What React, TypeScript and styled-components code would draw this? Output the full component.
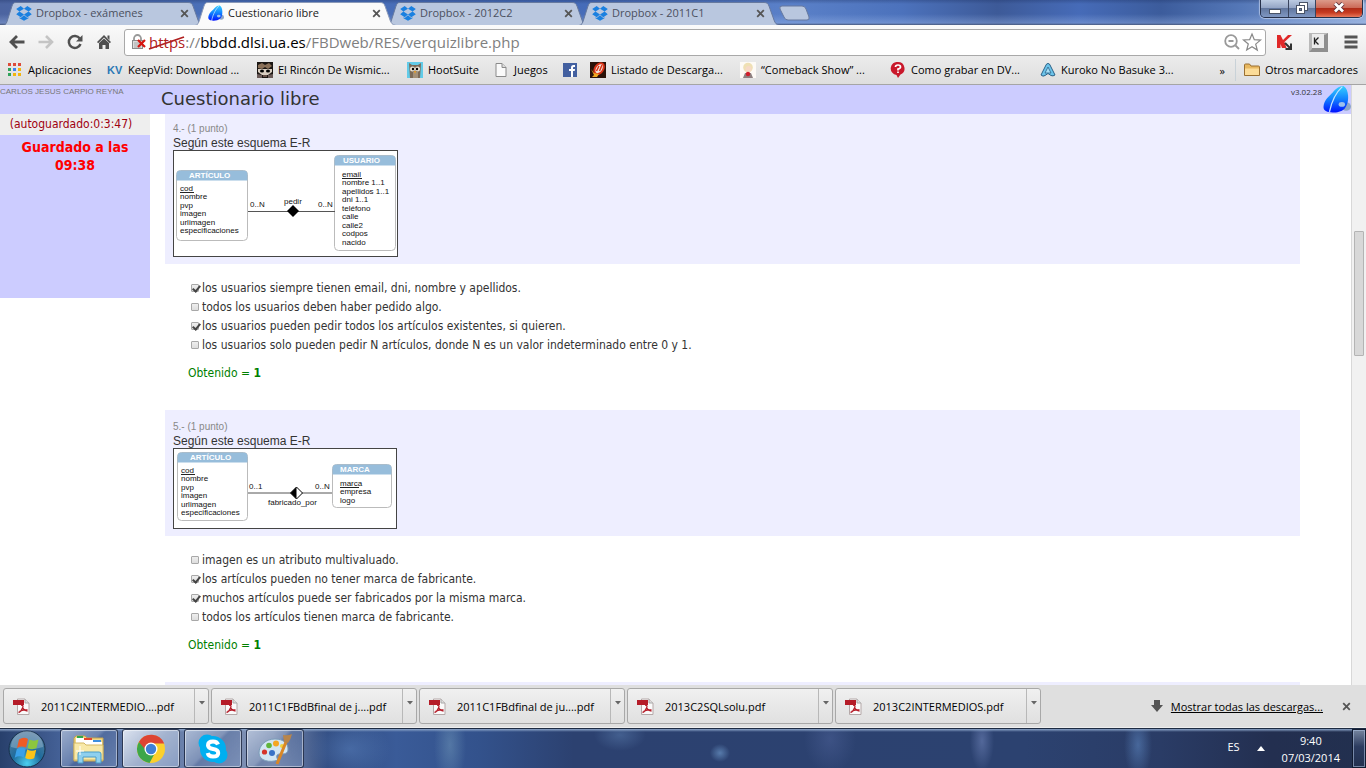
import React from "react";
import styled, { createGlobalStyle, css } from "styled-components";

const ui = `"Open Sans", "Noto Sans", sans-serif`;
const body = `"DejaVu Sans Condensed", "DejaVu Sans", sans-serif`;
const arial = `"Liberation Sans", Arial, sans-serif`;

const Global = createGlobalStyle`
  * { box-sizing: border-box; }
  body { margin: 0; font-family: ${ui}; font-size: 11px; color: #000; }
  button { font: inherit; color: inherit; padding: 0; margin: 0; border: 0; background: none; }
  a { color: inherit; text-decoration: none; }
  svg { display: block; flex: none; }
  p, h1, h2, ul { margin: 0; padding: 0; font-weight: normal; list-style: none; }
`;

const Shell = styled.div`
  height: 100vh;
  display: flex;
  flex-direction: column;
  overflow: hidden;
`;

/* ---------- title bar ---------- */
const TitleBar = styled.header`
  flex: none;
  height: 25px;
  display: flex;
  align-items: flex-end;
  padding-left: 3px;
  background:
    linear-gradient(180deg, rgba(30, 50, 100, 0.35) 0, rgba(30, 50, 100, 0) 4px, rgba(255, 255, 255, 0) 14px, rgba(170, 195, 240, 0.35) 23px, #47587c 25px),
    linear-gradient(90deg, #4c64a0 0, #4b70b8 15%, #456bb8 42%, #5a80c8 58%, #4c72bc 66%, #3d5a98 73%, #466bb8 79%, #3c5c9c 85%, #5578b8 91%, #8fa9d6 100%);
`;

const TabBox = styled.div<{ $active?: boolean }>`
  position: relative;
  flex: 0 1 201px;
  height: 24px;
  margin-right: -9px;
  z-index: ${(p) => (p.$active ? 2 : 1)};
  display: flex;
  align-items: center;
  gap: 4px;
  padding: 0 15px 0 13px;
  color: ${(p) => (p.$active ? "#222" : "#4b5060")};
  > svg:first-child { position: absolute; left: 0; top: 0; z-index: -1; }
`;
const TabTitle = styled.a`
  flex: 1;
  white-space: nowrap;
  overflow: hidden;
  line-height: 18px;
`;
const IconButton = styled.button`
  display: flex;
  align-items: center;
  justify-content: center;
  flex: none;
`;
const NewTab = styled(IconButton)`
  align-self: center;
  margin-left: 8px;
`;
const WindowControls = styled.div`
  margin-left: auto;
  margin-right: 3px;
  align-self: flex-start;
  display: flex;
  height: 18px;
  border: 1px solid #26304a;
  border-top: 0;
  border-radius: 0 0 5px 5px;
  overflow: hidden;
  box-shadow: 0 0 1px 1px rgba(220, 230, 250, 0.6);
`;
const WindowButton = styled.button<{ $close?: boolean }>`
  width: ${(p) => (p.$close ? 47 : 27)}px;
  display: flex;
  align-items: center;
  justify-content: center;
  padding-bottom: 2px;
  border-left: 1px solid #39445e;
  &:first-child { border-left: 0; }
  background: ${(p) =>
    p.$close
      ? "linear-gradient(#dc9a8a 0, #cc6a58 45%, #b02c18 50%, #c83c22 75%, #e8795c 100%)"
      : "linear-gradient(#bccbe2 0, #95a6c6 45%, #62779f 50%, #7f97c2 100%)"};
`;

/* ---------- toolbar ---------- */
const Toolbar = styled.nav`
  flex: none;
  height: 31px;
  display: flex;
  align-items: center;
  padding: 3px 8px 0 9px;
  background: linear-gradient(#fafafa, #ececec);
`;
const NavButtons = styled.div`
  display: flex;
  align-items: center;
  gap: 13px;
  width: 115px;
  flex: none;
`;
const AddressBar = styled.div`
  flex: 1;
  height: 27px;
  display: flex;
  align-items: center;
  padding: 0 2px 0 6px;
  background: #fff;
  border: 1px solid #a9a9a9;
  border-radius: 3px;
`;
const Url = styled.div`
  position: relative;
  flex: 1;
  margin-left: 2px;
  font-size: 15px;
  line-height: 22px;
  white-space: nowrap;
  color: #808080;
  > svg { position: absolute; left: -1px; top: 4px; }
`;
const Scheme = styled.span`color: #b02020;`;
const Host = styled.span`color: #000;`;
const Extensions = styled.div`
  display: flex;
  align-items: center;
  gap: 16px;
  margin-left: 10px;
`;

/* ---------- bookmarks ---------- */
const Bookmarks = styled.nav`
  flex: none;
  height: 29px;
  display: flex;
  align-items: center;
  padding: 0 8px 0 7px;
  background: linear-gradient(#ececec, #dedede);
  border-bottom: 1px solid #a5a5a5;
`;
const Bookmark = styled.a<{ $w?: number }>`
  display: flex;
  align-items: center;
  gap: 5px;
  flex: 0 0 ${(p) => (p.$w ? p.$w + "px" : "auto")};
  line-height: 18px;
  white-space: nowrap;
`;
const BookmarkEnd = styled.div`
  margin-left: auto;
  display: flex;
  align-items: center;
  gap: 8px;
`;
const Divider = styled.span`
  width: 1px;
  height: 22px;
  margin-left: 2px;
  background: #c9d2d8;
`;

/* ---------- page ---------- */
const Viewport = styled.div`
  flex: 1;
  min-height: 0;
  display: flex;
  background: #fff;
`;
const Page = styled.div`
  flex: 1;
  display: flex;
  flex-direction: column;
  overflow: hidden;
  color: #333;
`;
const PageHeader = styled.div`
  flex: none;
  height: 29px;
  display: flex;
  background: #ccf;
`;
const UserName = styled.div`
  width: 161px;
  font: 8px/14px ${arial};
  color: #777;
  white-space: nowrap;
`;
const PageTitle = styled.h1`
  flex: 1;
  font: 18px/28px "DejaVu Sans", sans-serif;
`;
const Version = styled.div`
  display: flex;
  gap: 1px;
  font: 8px/14px ${ui};
`;
const Columns = styled.div`
  flex: 1;
  min-height: 0;
  display: flex;
  align-items: flex-start;
`;
const Sidebar = styled.aside`
  flex: none;
  width: 150px;
  height: 184px;
  background: #ccf;
  text-align: center;
`;
const AutoSave = styled.p`
  background: #eee;
  color: #a00010;
  font: 12px/21px ${body};
  white-space: nowrap;
  padding-right: 8px;
`;
const Saved = styled.p`
  padding: 3px 20px;
  color: #f00;
  font: bold 14px/18px ${body};
`;
const Quiz = styled.main`
  flex: 1;
  padding: 0 51px 0 15px;
`;
const Prompt = styled.section<{ $first?: boolean }>`
  background: #eef;
  padding: ${(p) => (p.$first ? 8 : 10)}px 8px 7px;
`;
const Points = styled.p`
  font: 10px/14px ${arial};
  color: #888;
`;
const Statement = styled.h2`
  font: 12px/14px ${arial};
`;
const Answers = styled.div`
  padding: 15px 23px 27px;
  font: 12px/19px ${body};
`;
const Option = styled.label`
  display: flex;
  align-items: center;
  gap: 3px;
  padding-left: 3px;
  white-space: nowrap;
`;
const Check = styled.input`
  appearance: none;
  position: relative;
  margin: 0 0 2px;
  width: 8px;
  height: 8px;
  border: 1px solid #a8a8a8;
  border-radius: 1px;
  background: linear-gradient(#eee, #ddd);
  &:checked::after {
    content: "";
    position: absolute;
    left: 2px;
    top: -1px;
    width: 3px;
    height: 6px;
    border: solid #444;
    border-width: 0 2px 2px 0;
    transform: rotate(40deg);
  }
`;
const Score = styled.p`
  margin-top: 9px;
  color: #008000;
`;
const ScrollTrack = styled.div`
  flex: none;
  width: 15px;
  padding: 146px 2px 0;
  background: #f1f1f1;
  border-left: 1px solid #d8d8d8;
`;
const ScrollThumb = styled.div`
  height: 125px;
  width: 10px;
  background: #d8d8d8;
  border: 1px solid #b4b4b4;
  border-radius: 1px;
`;

/* ---------- downloads ---------- */
const Downloads = styled.footer`
  flex: none;
  height: 43px;
  display: flex;
  align-items: center;
  gap: 2px;
  padding: 0 15px 0 3px;
  background: #dfdfdf;
  border-bottom: 1px solid #eee;
`;
const DownloadItem = styled.div`
  flex: 0 1 206px;
  height: 36px;
  display: flex;
  border: 1px solid #a8a8a8;
  border-radius: 3px;
  background: linear-gradient(#f0f0f0, #e0e0e0);
`;
const FileButton = styled.button`
  flex: 1;
  min-width: 0;
  display: flex;
  align-items: center;
  gap: 11px;
  padding-left: 9px;
  white-space: nowrap;
`;
const FileMenu = styled.button`
  width: 14px;
  display: flex;
  justify-content: center;
  padding-top: 12px;
  border-left: 1px solid #b8b8b8;
`;
const ShowAll = styled.a`
  margin-left: auto;
  display: flex;
  align-items: center;
  gap: 8px;
  white-space: nowrap;
  span { text-decoration: underline; }
`;
const CloseShelf = styled(IconButton)`margin-left: 17px;`;

/* ---------- taskbar ---------- */
const Taskbar = styled.footer`
  flex: none;
  height: 40px;
  display: flex;
  align-items: stretch;
  gap: 4px;
  padding-left: 8px;
  border-top: 1px solid #1d2b42;
  color: #fff;
  background:
    linear-gradient(180deg, #8ba4c8 0, rgba(139, 164, 200, 0) 3px),
    radial-gradient(ellipse 16px 44px at 450px 16px, rgba(120, 160, 190, 0.45), transparent),
    radial-gradient(ellipse 26px 16px at 620px 6px, rgba(110, 150, 200, 0.35), transparent),
    radial-gradient(ellipse 10px 9px at 720px 24px, rgba(130, 180, 230, 0.5), transparent),
    radial-gradient(ellipse 26px 34px at 830px 10px, rgba(100, 120, 180, 0.3), transparent),
    radial-gradient(ellipse 12px 30px at 982px 12px, rgba(130, 150, 205, 0.45), transparent),
    radial-gradient(ellipse 14px 34px at 1138px 16px, rgba(100, 145, 205, 0.5), transparent),
    radial-gradient(ellipse 40px 30px at 350px 20px, rgba(90, 130, 190, 0.5), transparent),
    linear-gradient(90deg, #28406c 0, #48659c 5%, #8495b6 20%, #304b80 24%, #3a5b98 29%, #33528c 35%, #2c4170 42%, #2c4270 75%, #2a3c66 85%, #232f50 93%, #22304f 100%);
`;
const Start = styled(IconButton)`width: 38px; margin-right: 10px;`;
const TaskButton = styled.button<{ $active?: boolean }>`
  width: 58px;
  display: flex;
  align-items: center;
  justify-content: center;
  border: 1px solid rgba(20, 30, 55, 0.8);
  border-radius: 3px;
  box-shadow: inset 0 0 0 1px rgba(255, 255, 255, 0.45);
  ${(p) =>
    p.$active
      ? css`background: linear-gradient(135deg, rgba(235, 240, 248, 0.9) 0, rgba(185, 198, 220, 0.75) 50%, rgba(150, 170, 205, 0.7) 100%);`
      : css`background: linear-gradient(135deg, rgba(215, 225, 240, 0.6) 0, rgba(150, 168, 200, 0.4) 45%, rgba(80, 105, 155, 0.35) 50%, rgba(125, 148, 190, 0.4) 100%);`}
`;
const Tray = styled.div`
  margin-left: auto;
  display: flex;
  align-items: center;
  gap: 17px;
`;
const Lang = styled.button`padding-bottom: 4px;`;
const Clock = styled.div`
  text-align: center;
  line-height: 17px;
`;
const ShowDesktop = styled.button`
  width: 14px;
  margin-left: 8px;
  border: 1px solid #101a30;
  box-shadow: inset 0 0 0 1px rgba(170, 190, 220, 0.6);
  background: linear-gradient(#76859f, #2c3c60 45%, #22304f);
`;

/* ---------- icons ---------- */
const Cross = () => (
  <svg width="9" height="9" viewBox="0 0 9 9"><path d="M1.200 1.200l6.600 6.600M7.800 1.200l-6.600 6.600" stroke="#555" strokeWidth="1.800" /></svg>
);
const DropboxIcon = () => (
  <svg width="16" height="16" viewBox="0 0 16 16" fill="#1a80e0">
    <path d="M4.7 1L8 3.7 3.4 6.6 0.2 4zM11.3 1L8 3.7l4.6 2.900L15.800 4zM0.200 9.200L3.400 6.600 8 9.500 4.700 12.200zM15.800 9.200l-3.200-2.600L8 9.500l3.300 2.700zM3.500 12.200l1.200.8L8 10.300l3.300 2.700 1.200-.8v1.100L8 15.800l-4.500-2.500z" />
  </svg>
);
const Drop = ({ s }: { s: number }) => (
  <svg width={s} height={s} viewBox="0 0 26 26">
    <defs>
      <linearGradient id="drop" x1="0" y1="0" x2="0" y2="1">
        <stop offset="0" stopColor="#35cfff" /><stop offset=".5" stopColor="#1080ff" /><stop offset="1" stopColor="#0010ff" />
      </linearGradient>
    </defs>
    <ellipse cx="21.500" cy="20" rx="4.500" ry="4" fill="#8fa6c8" />
    <path d="M19 1c3 2 4 5 4.300 9 .3 6-1 9-3.300 12-3 3-7 3.500-11 3.500C4 25.500 0 24 .5 20 1 14 6 10 9 7c3-3.500 6-6 10-6z" fill="url(#drop)" />
    <path d="M18 1.500C13 6 8 15 6 25" stroke="#c4e4ff" strokeWidth="1.200" fill="none" />
    <ellipse cx="17.500" cy="18" rx="3" ry="2.300" fill="#9cc0ec" />
  </svg>
);
const TabShape = ({ active }: { active?: boolean }) => (
  <svg width="201" height="24" viewBox="0 0 201 24">
    <path d="M0 24.500C3 24 3.500 22 4.500 19L9 5C10 2 11 1.500 13 1.500H185C188 1.500 189 2.500 190 5l5 14c1 3 2.500 5 6 5.500z"
      fill={active ? "#fafafa" : "#b9c7df"} stroke={active ? "#8a99b8" : "#66799f"} />
  </svg>
);
const LockIcon = () => (
  <svg width="16" height="16" viewBox="0 0 16 16">
    <path d="M3 7V4.500a3.500 3.500 0 0 1 7 0V7" stroke="#999" strokeWidth="1.800" fill="none" />
    <rect x="1.500" y="6.500" width="10" height="8" fill="#ddd" stroke="#8a8a8a" />
    <path d="M3 9h7M3 11h7M3 13h7" stroke="#aaa" />
    <path d="M7 6l7 7M14 6l-7 7" stroke="#d6150f" strokeWidth="2.200" />
  </svg>
);
const AppsIcon = () => (
  <svg width="16" height="16" viewBox="0 0 16 16">
    {["#dd4b39", "#dd4b39", "#dd4b39", "#2fa35a", "#3c82f0", "#f2b50f", "#2fa35a", "#f2b50f", "#f2b50f"].map((c, i) => (
      <rect key={i} x={1 + (i % 3) * 5} y={1 + Math.floor(i / 3) * 5} width="3" height="3" fill={c} />
    ))}
  </svg>
);
const KvIcon = () => (
  <svg width="16" height="16" viewBox="0 0 16 16">
    <text x="0" y="12" fontFamily="Liberation Sans, sans-serif" fontSize="11" fontWeight="bold" fill="#2b78b5">KV</text>
  </svg>
);
const FaceIcon = () => (
  <svg width="16" height="16" viewBox="0 0 16 16">
    <rect width="16" height="16" fill="#1a1512" />
    <path d="M1 7h14v3l-4 3H5l-4-3z" fill="#d8cdc0" />
    <path d="M1 3l4-2 3 2 4-2 3 3-4 3-3-2-3 2-4-1z" fill="#8a7058" />
    <path d="M0 12l5 1v3H0zM16 12l-5 1v3h5z" fill="#6a5a58" />
    <ellipse cx="5" cy="9" rx="2" ry="1.600" /><ellipse cx="11" cy="9" rx="2" ry="1.600" />
    <path d="M6 14h4" stroke="#b08a7c" />
  </svg>
);
const OwlIcon = () => (
  <svg width="16" height="16" viewBox="0 0 16 16">
    <rect width="16" height="16" fill="#62cbe8" />
    <path d="M2 1l3 2h6l3-2-.5 8-.5 7H3z" fill="#7b6a58" />
    <path d="M6 10h5v6H6z" fill="#a39078" />
    <circle cx="5.500" cy="7" r="2.500" fill="#e9e2d4" /><circle cx="10.500" cy="7" r="2.500" fill="#e9e2d4" />
    <circle cx="6" cy="7" r="1.200" /><circle cx="10" cy="7" r="1.200" />
    <path d="M7 9h2l-1 3z" fill="#f0a020" />
  </svg>
);
const FileIcon = () => (
  <svg width="16" height="16" viewBox="0 0 16 16">
    <path d="M3 1.500h6l4 4v9H3z" fill="#fafafa" stroke="#8a8a8a" /><path d="M9 1.500v4h4" fill="#ddd" stroke="#8a8a8a" />
  </svg>
);
const FacebookIcon = () => (
  <svg width="16" height="16" viewBox="0 0 16 16">
    <rect x="1" y="1" width="14" height="14" fill="#4360a0" />
    <path d="M9 15V9h-2V7h2V5.500Q9 3 11.500 3H13v2h-1.200q-.8 0-.8.800V7h2l-.3 2H11v6z" fill="#fff" />
  </svg>
);
const FireIcon = () => (
  <svg width="16" height="16" viewBox="0 0 16 16">
    <rect width="16" height="16" fill="#2a1208" />
    <ellipse cx="9.500" cy="6.500" rx="4" ry="6" transform="rotate(35 9 6)" fill="#f2e5dc" stroke="#d93418" strokeWidth="2" />
    <path d="M9 4L6.500 9M12 3L9.500 9" stroke="#d93418" strokeWidth="1.500" />
    <path d="M1 7l3 4 5 1-2 3H2l2-2z" fill="#f0a820" />
  </svg>
);
const BlondIcon = () => (
  <svg width="16" height="16" viewBox="0 0 16 16">
    <rect width="16" height="16" fill="#fdfaf6" />
    <circle cx="8" cy="5.500" r="4.800" fill="#efe0b4" /><circle cx="8.500" cy="7" r="3" fill="#f6d9c6" />
    <path d="M3 16l2-5h6l2 5z" fill="#8e8080" /><circle cx="8" cy="12" r="2.200" fill="#d01f2d" />
  </svg>
);
const QuestionIcon = () => (
  <svg width="16" height="16" viewBox="0 0 16 16">
    <path d="M8 0a6.500 6.500 0 0 1 2.500 12.500L8 16l-1.500-3A6.500 6.500 0 0 1 8 0z" fill="#c9182b" />
    <path d="M5.500 5Q5.500 3 8 3t2.500 2Q10.500 6.500 8 7v1.500M8 9.500v1.500" stroke="#fff" strokeWidth="1.700" fill="none" />
  </svg>
);
const AIcon = () => (
  <svg width="16" height="16" viewBox="0 0 16 16">
    <path d="M8 1.500Q9.500 1.500 10 3l5 10q-2 1.500-4 .5L8 11.500l-3 2Q3 15 1 13L6 3q.5-1.500 2-1.500z" fill="#6cc4ea" stroke="#2b6288" />
    <path d="M8 5l3 6H5z" fill="#a6e0f8" stroke="#2b6288" strokeWidth=".8" />
  </svg>
);
const FolderIcon = () => (
  <svg width="16" height="16" viewBox="0 0 16 16">
    <path d="M.5 13.500V3q0-1 1-1h4l1.500 2H14.500q1 0 1 1v8.500z" fill="#e8b860" stroke="#9a6f30" />
    <path d="M1 6.500h14V13H1z" fill="#fcdc98" />
  </svg>
);
const PdfIcon = () => (
  <svg width="17" height="17" viewBox="0 0 17 17">
    <path d="M4.500 1h7.500l4 4v11.500h-11.500z" fill="#fafafa" stroke="#b5a8a8" /><path d="M12 1v4h4" fill="#ddd" stroke="#aaa" />
    <rect x="0" y="2" width="11" height="5" fill="#b51c28" />
    <path d="M8 7c2 0 2.500 1 1.500 3-.7 2-2 4-4 4.500M9.500 9.500c1 2 2.500 3.500 5 3.500M6.500 13.500c2-1.500 5-2 8-1.500" stroke="#b51c28" strokeWidth="1.300" fill="none" />
  </svg>
);
const BackIcon = ({ c }: { c: string }) => (
  <svg width="16" height="14" viewBox="0 0 16 14"><path d="M15.500 7H2.500M8 1L2 7l6 6" stroke={c} strokeWidth="2.800" fill="none" /></svg>
);
const FlagWindows = () => (
  <svg width="38" height="38" viewBox="0 0 38 38">
    <defs>
      <radialGradient id="orb" cx=".5" cy=".9" r=".9">
        <stop offset="0" stopColor="#4ad0f0" /><stop offset=".45" stopColor="#1f6c9c" /><stop offset="1" stopColor="#5d7f9f" />
      </radialGradient>
    </defs>
    <circle cx="19" cy="19" r="18" fill="url(#orb)" stroke="#16304a" />
    <path d="M3 17a16 16 0 0 1 32 0q-16 5-32 0z" fill="#cfe0ee" opacity=".3" />
    <path d="M11 9.500q4.500-3 9-.6l-2 8.600q-4.500-2.300-9 .4z" fill="#ee5b26" />
    <path d="M21.500 9.500q4.500 2.300 9 0l-2 8.600q-4.500 2.300-9-.2z" fill="#8cc63f" />
    <path d="M8.700 19.300q4.500-2.700 9-.4l-2 8.500q-4.500-2.300-9 .4z" fill="#3aa0e8" />
    <path d="M19.200 19.500q4.500 2.500 9 .2l-2 8.500q-4.500 2.300-9-.2z" fill="#fbc318" />
  </svg>
);
const ExplorerIcon = () => (
  <svg width="34" height="30" viewBox="0 0 34 30">
    <path d="M2 4l2-2h9l2 2h16v23H2z" fill="#f0d886" stroke="#c5a24c" />
    <path d="M5 2h6v2H5z" fill="#2fa84a" /><path d="M12 4h8v2h-8z" fill="#e5452c" /><path d="M21 6h8v2h-8z" fill="#3c8fe0" />
    <path d="M4 4h8v2h9v2h9v3H4z" fill="#fff" />
    <path d="M2 9h10l2 2h17v15H2z" fill="#f8e9a8" stroke="#d3b865" />
    <path d="M6 29v-9q0-2 2-2h19q2 0 2 2v9h-5v-6H11v6z" fill="#8fd0ee" stroke="#4b9cc8" />
    <path d="M8 12v9M4 17h8" stroke="#fff" />
  </svg>
);
const ChromeIcon = () => (
  <svg width="30" height="30" viewBox="0 0 30 30">
    <circle cx="15" cy="15" r="14" fill="#fbd02c" />
    <path d="M2.900 8A14 14 0 0 1 28.200 9.500H15L9 18z" fill="#dd4433" />
    <path d="M2.900 8A14 14 0 0 0 13.500 29l6-11-9-1z" fill="#3da64a" />
    <circle cx="15" cy="15" r="6.500" fill="#fff" /><circle cx="15" cy="15" r="5.200" fill="#3f7fd6" />
  </svg>
);
const SkypeIcon = () => (
  <svg width="30" height="30" viewBox="0 0 30 30">
    <circle cx="9" cy="9" r="8.500" fill="#00aff0" /><circle cx="21" cy="21" r="8.500" fill="#00aff0" /><circle cx="15" cy="15" r="13" fill="#00aff0" />
    <path d="M20 10.500Q19 7.500 15 7.500q-5 0-5 3.700 0 3 5 3.800 5.200.8 5.200 3.900 0 3.600-5.200 3.600-4.500 0-5.300-3.500" stroke="#fff" strokeWidth="4" fill="none" />
  </svg>
);
const PaintIcon = () => (
  <svg width="34" height="32" viewBox="0 0 34 32">
    <path d="M1 20C1 12 8 6 17 6s13 5 13 10-4 5-8 5-4 3-2 6c-8 3-19 1-19-7z" fill="#d3e6f3" stroke="#7b9cb8" />
    <circle cx="6.500" cy="19" r="2.600" fill="#d5342b" /><circle cx="11" cy="12.500" r="2.800" fill="#60b53c" /><circle cx="18" cy="10.500" r="3" fill="#f5a623" />
    <circle cx="14" cy="20" r="3" fill="#3972c6" /><circle cx="24" cy="13" r="2" fill="#f3d23a" />
    <path d="M28 9L19 31" stroke="#d98726" strokeWidth="3" /><path d="M25 2q5 1 9-1-1 5-4 9l-4-1z" fill="#b8854a" />
  </svg>
);

/* ---------- entity-relationship diagrams ---------- */
type EntityProps = { x: number; y: number; w: number; h: number; name: string; nx: number; key0: string; kw: number; rows: string[]; tx: number; ty: number };
const Entity = ({ x, y, w, h, name, nx, key0, kw, rows, tx, ty }: EntityProps) => (
  <g>
    <rect x={x} y={y} width={w} height={h} rx="4" fill="#fff" stroke="#bbb" />
    <path d={`M${x} ${y + 10}V${y + 4}q0-4 4-4h${w - 8}q4 0 4 4v6z`} fill="#97bddb" />
    <text x={nx} y={y + 7.5} fontWeight="bold" fill="#fff">{name}</text>
    {[key0, ...rows].map((r, i) => (
      <text key={r} x={tx} y={ty + Math.floor(i * 8.5)}>{r}</text>
    ))}
    <path d={`M${tx} ${ty + 1.5}h${kw}`} stroke="#222" />
  </g>
);
const articulo = ["nombre", "pvp", "imagen", "urlimagen", "especificaciones"];
const Diagram1 = () => (
  <svg width="225" height="107" viewBox="0 0 225 107" fontFamily="Liberation Sans, sans-serif" fontSize="8" fill="#111">
    <rect x=".5" y=".5" width="224" height="106" fill="#fff" stroke="#444" />
    <Entity x={3.5} y={20.5} w={71} h={70} name="ARTÍCULO" nx={16} key0="cod" kw={14} rows={articulo} tx={7} ty={41} />
    <Entity x={161.5} y={5.5} w={61} h={95} name="USUARIO" nx={170} key0="email" kw={20}
      rows={["nombre 1..1", "apellidos 1..1", "dni 1..1", "teléfono", "calle", "calle2", "codpos", "nacido"]} tx={169} ty={27} />
    <path d="M75 61.500h87" stroke="#555" />
    <path d="M120 55l6 6-6 6-6-6z" fill="#000" />
    <text x="77" y="57">0..N</text><text x="111" y="54">pedir</text><text x="145" y="57">0..N</text>
  </svg>
);
const Diagram2 = () => (
  <svg width="224" height="81" viewBox="0 0 224 81" fontFamily="Liberation Sans, sans-serif" fontSize="8" fill="#111">
    <rect x=".5" y=".5" width="223" height="80" fill="#fff" stroke="#444" />
    <Entity x={4.5} y={4.5} w={70} h={68} name="ARTÍCULO" nx={17} key0="cod" kw={14} rows={articulo} tx={8} ty={25} />
    <Entity x={159.5} y={16.5} w={59} h={43} name="MARCA" nx={167} key0="marca" kw={19} rows={["empresa", "logo"]} tx={167} ty={38} />
    <path d="M75 45h84" stroke="#555" />
    <path d="M123.500 39l6 6-6 6-6-6z" fill="#fff" stroke="#000" /><path d="M123.500 39v12l-6-6z" fill="#000" />
    <text x="76" y="41">0..1</text><text x="142" y="41">0..N</text><text x="95" y="57">fabricado_por</text>
  </svg>
);

const tabs = ["Dropbox - exámenes", "Cuestionario libre", "Dropbox - 2012C2", "Dropbox - 2011C1"];
const bookmarks: [React.ReactNode, string, number][] = [
  [<AppsIcon />, "Aplicaciones", 100],
  [<KvIcon />, "KeepVid: Download ...", 150],
  [<FaceIcon />, "El Rincón De Wismic...", 150],
  [<OwlIcon />, "HootSuite", 86],
  [<FileIcon />, "Juegos", 69],
  [<FacebookIcon />, "", 28],
  [<FireIcon />, "Listado de Descarga...", 150],
  [<BlondIcon />, "“Comeback Show” ...", 150],
  [<QuestionIcon />, "Como grabar en DV...", 150],
  [<AIcon />, "Kuroko No Basuke 3...", 150],
];
const files = ["2011C2INTERMEDIO....pdf", "2011C1FBdBfinal de j....pdf", "2011C1FBdfinal de ju....pdf", "2013C2SQLsolu.pdf", "2013C2INTERMEDIOS.pdf"];

const questions = [
  {
    n: 4, art: <Diagram1 />,
    options: [
      ["los usuarios siempre tienen email, dni, nombre y apellidos.", true],
      ["todos los usuarios deben haber pedido algo.", false],
      ["los usuarios pueden pedir todos los artículos existentes, si quieren.", true],
      ["los usuarios solo pueden pedir N artículos, donde N es un valor indeterminado entre 0 y 1.", false],
    ] as [string, boolean][],
  },
  {
    n: 5, art: <Diagram2 />,
    options: [
      ["imagen es un atributo multivaluado.", false],
      ["los artículos pueden no tener marca de fabricante.", true],
      ["muchos artículos puede ser fabricados por la misma marca.", true],
      ["todos los artículos tienen marca de fabricante.", false],
    ] as [string, boolean][],
  },
];

export default function App() {
  return (
    <Shell>
      <Global />
      <TitleBar>
        {tabs.map((t, i) => (
          <TabBox key={t} $active={i === 1}>
            <TabShape active={i === 1} />
            {i === 1 ? <Drop s={16} /> : <DropboxIcon />}
            <TabTitle href="#">{t}</TabTitle>
            <IconButton aria-label="Cerrar"><Cross /></IconButton>
          </TabBox>
        ))}
        <NewTab aria-label="Nueva pestaña">
          <svg width="31" height="16" viewBox="0 0 31 16">
            <path d="M3 1h20q3 0 4 3l3 8q.8 3-2 3H9q-3 0-4-3L1 4Q0 1 3 1z" fill="#b9c7df" stroke="#66799f" />
          </svg>
        </NewTab>
        <WindowControls>
          <WindowButton aria-label="Minimizar">
            <svg width="12" height="12" viewBox="0 0 12 12"><rect x=".5" y="7.500" width="11" height="4" fill="#fff" stroke="#4a5468" /></svg>
          </WindowButton>
          <WindowButton aria-label="Restaurar">
            <svg width="12" height="12" viewBox="0 0 12 12">
              <rect x="3.500" y=".5" width="8" height="8" fill="#fff" stroke="#4a5468" />
              <rect x=".5" y="3.500" width="8" height="8" fill="#fff" stroke="#4a5468" /><rect x="3.500" y="6.500" width="2" height="2" fill="#7488ac" stroke="#4a5468" />
            </svg>
          </WindowButton>
          <WindowButton $close aria-label="Cerrar ventana">
            <svg width="12" height="11" viewBox="0 0 12 11">
              <path d="M2 1.500l8 8M10 1.500l-8 8" stroke="#5b3038" strokeWidth="4.500" /><path d="M2 1.500l8 8M10 1.500l-8 8" stroke="#fff" strokeWidth="2.800" />
            </svg>
          </WindowButton>
        </WindowControls>
      </TitleBar>

      <Toolbar>
        <NavButtons>
          <IconButton aria-label="Atrás"><BackIcon c="#505050" /></IconButton>
          <IconButton aria-label="Adelante">
            <svg width="16" height="14" viewBox="0 0 16 14"><path d="M.5 7h13M8 1l6 6-6 6" stroke="#c4c4c4" strokeWidth="2.600" fill="none" /></svg>
          </IconButton>
          <IconButton aria-label="Recargar">
            <svg width="16" height="16" viewBox="0 0 16 16">
              <path d="M12.800 4.500A6 6 0 1 0 13.500 10" stroke="#505050" strokeWidth="2.500" fill="none" /><path d="M15.500 1v6.500H9z" fill="#505050" />
            </svg>
          </IconButton>
          <IconButton aria-label="Inicio">
            <svg width="16" height="16" viewBox="0 0 16 16">
              <path d="M8 1l7 7-1.200 1.200L8 3.500 2.200 9.200 1 8z" fill="#505050" /><path d="M3 9l5-4.500L13 9v6H9.500v-4h-3v4H3z" fill="#505050" /><path d="M11.500 1.500h2V6l-2-2z" fill="#505050" />
            </svg>
          </IconButton>
        </NavButtons>
        <AddressBar>
          <LockIcon />
          <Url role="textbox" aria-label="Dirección">
            <Scheme>https</Scheme>://<Host>bbdd.dlsi.ua.es</Host>/FBDweb/RES/verquizlibre.php
            <svg width="38" height="16" viewBox="0 0 38 16"><path d="M1 14L36 2" stroke="#b02020" strokeWidth="1.800" /></svg>
          </Url>
          <IconButton aria-label="Zoom">
            <svg width="18" height="18" viewBox="0 0 18 18"><circle cx="8" cy="8" r="5.800" stroke="#999" strokeWidth="1.800" fill="none" /><path d="M5.500 8h5M12.500 12.500l3.500 3.500" stroke="#999" strokeWidth="1.800" /></svg>
          </IconButton>
          <IconButton aria-label="Marcador">
            <svg width="22" height="20" viewBox="0 0 22 20"><path d="M11 2l2.300 5.700 6.200.4-4.800 4 1.600 6L11 14.700 5.700 18l1.600-6-4.800-4 6.200-.4z" fill="#fff" stroke="#888" strokeWidth="1.200" /></svg>
          </IconButton>
        </AddressBar>
        <Extensions>
          <IconButton aria-label="Kaspersky">
            <svg width="17" height="17" viewBox="0 0 17 17">
              <path d="M1 1h3.500L7 6l5-5h4L8.500 8l2 6H6L4.500 10v4H1z" fill="#e02828" /><path d="M9 9l5 5M15 9.500V15H9.500" stroke="#333" strokeWidth="2" fill="none" />
            </svg>
          </IconButton>
          <IconButton aria-label="Teclado">
            <svg width="19" height="19" viewBox="0 0 19 19">
              <rect width="19" height="19" fill="#8f8f8f" /><path d="M0 0h19l-3 2H3v14l-3 3z" fill="#b9b9b9" /><rect x="3" y="1" width="12" height="14" fill="#ececec" />
              <path d="M5.500 4.500v7M9.500 4.500l-3.500 3.500 3.500 3.500" stroke="#222" strokeWidth="1.300" fill="none" />
            </svg>
          </IconButton>
          <IconButton aria-label="Menú">
            <svg width="14" height="14" viewBox="0 0 14 14"><path d="M.5 2h13M.5 7h13M.5 12h13" stroke="#555" strokeWidth="3" /></svg>
          </IconButton>
        </Extensions>
      </Toolbar>

      <Bookmarks>
        {bookmarks.map(([icon, text, w], i) => (
          <Bookmark key={i} href="#" $w={w} aria-label={text || "Facebook"}>{icon}{text}</Bookmark>
        ))}
        <BookmarkEnd>
          <button aria-label="Más marcadores">»</button>
          <Divider />
          <Bookmark href="#"><FolderIcon />Otros marcadores</Bookmark>
        </BookmarkEnd>
      </Bookmarks>

      <Viewport>
        <Page>
          <PageHeader>
            <UserName>CARLOS JESUS CARPIO REYNA</UserName>
            <PageTitle>Cuestionario libre</PageTitle>
            <Version>v3.02.28<Drop s={28} /></Version>
          </PageHeader>
          <Columns>
            <Sidebar>
              <AutoSave>(autoguardado:0:3:47)</AutoSave>
              <Saved>Guardado a las 09:38</Saved>
            </Sidebar>
            <Quiz>
              {questions.map((q, i) => (
                <React.Fragment key={q.n}>
                  <Prompt $first={i === 0}>
                    <Points>{q.n}.- (1 punto)</Points>
                    <Statement>Según este esquema E-R</Statement>
                    {q.art}
                  </Prompt>
                  <Answers>
                    {q.options.map(([text, on]) => (
                      <Option key={text}><Check type="checkbox" defaultChecked={on} />{text}</Option>
                    ))}
                    <Score>Obtenido = <b>1</b></Score>
                  </Answers>
                </React.Fragment>
              ))}
              <Prompt />
            </Quiz>
          </Columns>
        </Page>
        <ScrollTrack><ScrollThumb /></ScrollTrack>
      </Viewport>

      <Downloads>
        {files.map((f) => (
          <DownloadItem key={f}>
            <FileButton><PdfIcon />{f}</FileButton>
            <FileMenu aria-label="Opciones"><svg width="6" height="4" viewBox="0 0 6 4"><path d="M0 0h6L3 3.500z" fill="#666" /></svg></FileMenu>
          </DownloadItem>
        ))}
        <ShowAll href="#">
          <svg width="12" height="12" viewBox="0 0 12 12"><path d="M3 0h6v5h3l-6 7-6-7h3z" fill="#555" /></svg>
          <span>Mostrar todas las descargas...</span>
        </ShowAll>
        <CloseShelf aria-label="Cerrar descargas"><Cross /></CloseShelf>
      </Downloads>

      <Taskbar>
        <Start aria-label="Inicio"><FlagWindows /></Start>
        <TaskButton aria-label="Explorador"><ExplorerIcon /></TaskButton>
        <TaskButton $active aria-label="Chrome"><ChromeIcon /></TaskButton>
        <TaskButton aria-label="Skype"><SkypeIcon /></TaskButton>
        <TaskButton aria-label="Paint"><PaintIcon /></TaskButton>
        <Tray>
          <Lang>ES</Lang>
          <IconButton aria-label="Iconos ocultos"><svg width="8" height="5" viewBox="0 0 8 5"><path d="M0 5l4-5 4 5z" fill="#fff" /></svg></IconButton>
          <Clock>9:40<br />07/03/2014</Clock>
        </Tray>
        <ShowDesktop aria-label="Mostrar escritorio" />
      </Taskbar>
    </Shell>
  );
}
